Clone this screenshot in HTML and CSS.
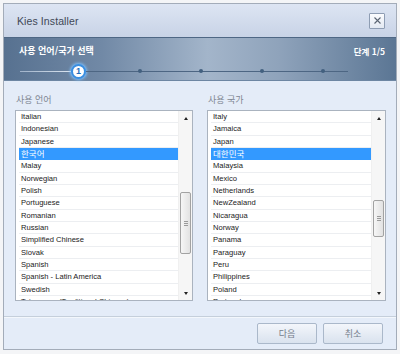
FILE: index.html
```html
<!DOCTYPE html>
<html lang="ko">
<head>
<meta charset="utf-8">
<title>Kies Installer</title>
<link rel="stylesheet" href="styles.css">
</head>
<body>
<div class="frame">
  <div class="window">
    <div class="titlebar">
      <span class="title">Kies Installer</span>
      <button class="close" aria-label="close">
        <svg width="7" height="7" viewBox="0 0 7 7"><path d="M0.5 0.5L6.5 6.5M6.5 0.5L0.5 6.5" stroke="#5a6472" stroke-width="1.1"/></svg>
      </button>
    </div>
    <div class="stephead">
      <div class="steprow">
        <span class="steptitle">사용 언어/국가 선택</span>
        <span class="stepcount">단계 1/5</span>
      </div>
      <div class="progress">
        <div class="track-done"></div>
        <div class="circle">1</div>
        <div class="track-rest">
          <span class="dot"></span><span class="dot"></span><span class="dot"></span><span class="dot"></span>
        </div>
      </div>
    </div>
    <div class="content">
      <div class="col">
        <div class="label">사용 언어</div>
        <div class="listbox">
          <div class="items">
            <div class="row">Italian</div>
            <div class="row">Indonesian</div>
            <div class="row">Japanese</div>
            <div class="row sel ko">한국어</div>
            <div class="row">Malay</div>
            <div class="row">Norwegian</div>
            <div class="row">Polish</div>
            <div class="row">Portuguese</div>
            <div class="row">Romanian</div>
            <div class="row">Russian</div>
            <div class="row">Simplified Chinese</div>
            <div class="row">Slovak</div>
            <div class="row">Spanish</div>
            <div class="row">Spanish - Latin America</div>
            <div class="row">Swedish</div>
            <div class="row">Taiwanese (Traditional Chinese)</div>
          </div>
          <div class="scrollbar">
            <span class="arrow up"></span>
            <div class="thumb thumb-left"><span class="grip"></span></div>
            <span class="arrow down"></span>
          </div>
        </div>
      </div>
      <div class="col">
        <div class="label">사용 국가</div>
        <div class="listbox">
          <div class="items">
            <div class="row">Italy</div>
            <div class="row">Jamaica</div>
            <div class="row">Japan</div>
            <div class="row sel ko">대한민국</div>
            <div class="row">Malaysia</div>
            <div class="row">Mexico</div>
            <div class="row">Netherlands</div>
            <div class="row">NewZealand</div>
            <div class="row">Nicaragua</div>
            <div class="row">Norway</div>
            <div class="row">Panama</div>
            <div class="row">Paraguay</div>
            <div class="row">Peru</div>
            <div class="row">Philippines</div>
            <div class="row">Poland</div>
            <div class="row">Portugal</div>
          </div>
          <div class="scrollbar">
            <span class="arrow up"></span>
            <div class="thumb thumb-right"><span class="grip"></span></div>
            <span class="arrow down"></span>
          </div>
        </div>
      </div>
    </div>
    <div class="footer">
      <button class="btn">다음</button>
      <button class="btn">취소</button>
    </div>
  </div>
</div>
</body>
</html>
```
FILE: styles.css
```css
* { box-sizing: border-box; }
html, body { margin: 0; padding: 0; background: #ffffff; }
body { width: 400px; height: 354px; overflow: hidden; font-family: "Liberation Sans", "Noto Sans CJK KR", sans-serif; }

.frame { padding: 3px 3px 4px 3px; background: #f4f5f7; height: 354px; }
.window {
  height: 347px;
  border: 1px solid #a3acb9;
  display: flex;
  flex-direction: column;
  background: #e4ecf8;
}

.titlebar {
  height: 33px;
  flex: none;
  display: flex;
  align-items: center;
  justify-content: space-between;
  padding: 0 11px 0 13px;
  background: linear-gradient(#dde5f3, #c8d3e6);
}
.title { font-size: 10.5px; color: #3e4857; letter-spacing: 0.1px; padding-top: 1px; }
.close {
  width: 16px; height: 16px; padding: 0; margin-top: 0;
  border: 1px solid #8e9db3; border-radius: 1px;
  background: linear-gradient(#fbfcfe, #e3e9f2);
  display: flex; align-items: center; justify-content: center;
}

.stephead {
  height: 44px;
  flex: none;
  border-top: 1px solid #4e6784;
  border-bottom: 1px solid #6d86a3;
  background: linear-gradient(90deg, #577190 0%, #7189a6 25%, #a3b5ca 52%, #8fa3bb 70%, #5b7694 100%);
  padding: 7px 11px 0 15px;
  display: flex;
  flex-direction: column;
}
.steprow { display: flex; justify-content: space-between; align-items: center; height: 12px; }
.steptitle, .stepcount {
  font-family: "Noto Sans CJK KR", sans-serif;
  font-weight: bold; color: #ffffff; font-size: 9px; line-height: 12px;
}
.stepcount { font-size: 8.5px; }

.progress { display: flex; align-items: center; height: 16px; margin-top: 6px; margin-left: 1px; }
.track-done { width: 51px; height: 1px; background: linear-gradient(90deg, #9fb2c9, #dbe5f0); }
.circle {
  width: 15px; height: 15px; flex: none;
  border-radius: 50%;
  background: #ffffff;
  border: 2px solid #3a8ee0;
  box-shadow: 0 0 3px 1px #7fc1ff;
  color: #1f6dbd; font-size: 9px; font-weight: bold; line-height: 11px; text-align: center;
  font-family: "Liberation Sans", sans-serif;
}
.track-rest {
  width: 262px; height: 1px; background: #4d6683;
  display: flex; align-items: center; gap: 57.3px;
  padding-left: 51.5px;
}
.dot { width: 4px; height: 4px; border-radius: 50%; background: #42607f; flex: none; }

.content {
  flex: 1;
  display: flex;
  gap: 14px;
  padding: 13px 10px 0 11px;
}
.col { width: 178px; display: flex; flex-direction: column; }
.col + .col { width: 179px; }
.label {
  font-family: "Noto Sans CJK KR", sans-serif;
  font-size: 9px; line-height: 11px; color: #7e8692; height: 11px;
  margin-bottom: 5px; padding-left: 1px;
}
.listbox {
  height: 191px;
  border: 1px solid #aab3bf;
  background: #ffffff;
  display: flex;
  overflow: hidden;
}
.items { flex: 1; overflow: hidden; padding-left: 3px; }
.row {
  height: 12.33px;
  line-height: 11.5px;
  font-size: 7.6px;
  color: #222222;
  padding-left: 2px;
  border-bottom: 1px solid #eceef1;
  white-space: nowrap;
}
.row.ko { font-family: "Noto Sans CJK KR", sans-serif; font-size: 8.5px; }
.row.sel { background: #3399ff; color: #ffffff; border-bottom-color: #3399ff; }

.scrollbar {
  width: 14px; flex: none;
  background: #f6f6f6;
  border-left: 1px solid #f0f0f0;
  display: flex; flex-direction: column; align-items: center;
}
.arrow { width: 0; height: 0; border-left: 2.5px solid transparent; border-right: 2.5px solid transparent; }
.arrow.up { border-bottom: 3px solid #222; margin-top: 6px; }
.arrow.down { border-top: 3px solid #222; margin-top: auto; margin-bottom: 5px; }
.thumb {
  width: 11px;
  border: 1px solid #a2a2a2; border-radius: 2px;
  background: linear-gradient(90deg, #f6f6f6, #e2e2e2);
  display: flex; align-items: center; justify-content: center;
}
.thumb-left { height: 62px; margin-top: 72px; }
.thumb-right { height: 37px; margin-top: 80px; }
.grip { width: 4px; height: 5px; border-top: 1px solid #9a9a9a; border-bottom: 1px solid #9a9a9a; position: relative; }
.grip::after { content: ""; position: absolute; left: 0; right: 0; top: 1px; height: 1px; background: #9a9a9a; }

.footer {
  height: 33px; flex: none;
  border-top: 1px solid #c5cfdb;
  box-shadow: inset 0 1px 0 #f3f7fc;
  display: flex; justify-content: flex-end; align-items: flex-start;
  gap: 6px;
  padding: 6px 13px 0 0;
}
.btn {
  width: 60px; height: 21px; padding: 0;
  border: 1px solid #aab8ca; border-radius: 2px;
  background: linear-gradient(#f3f6fb, #d9e2ee);
  font-family: "Noto Sans CJK KR", sans-serif; font-size: 9px; color: #737c8a;
}
```
